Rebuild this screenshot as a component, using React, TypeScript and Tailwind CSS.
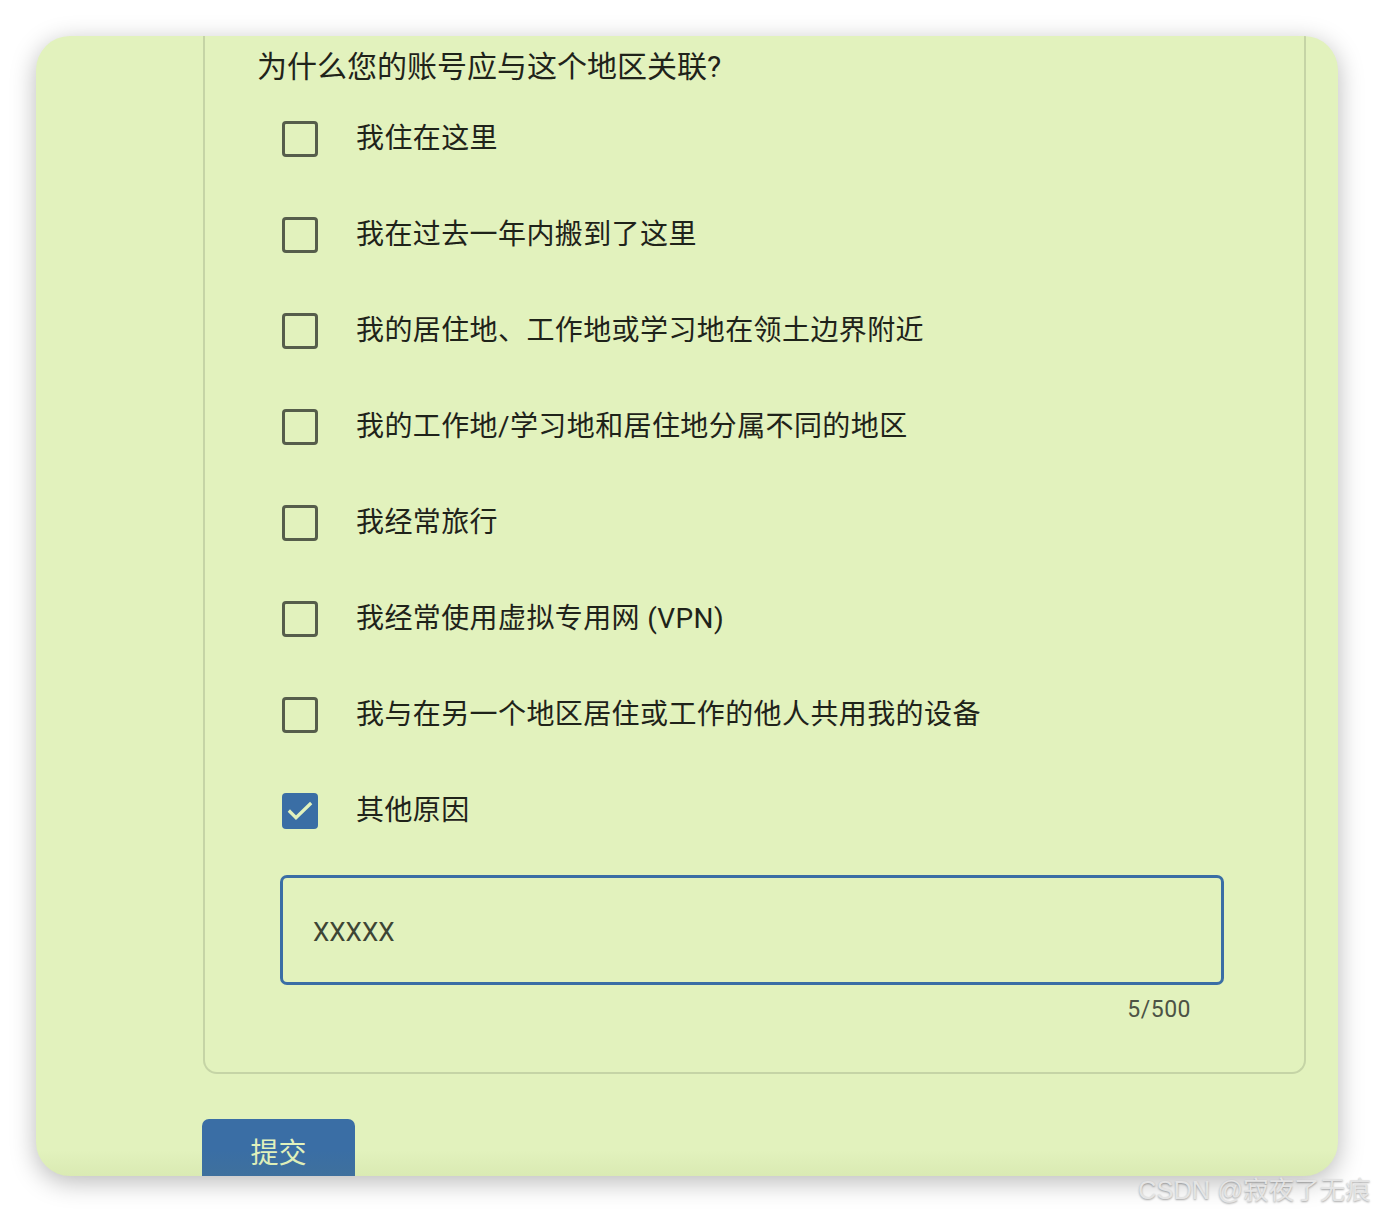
import { useState } from 'react';

const reasons = [
  '我住在这里',
  '我在过去一年内搬到了这里',
  '我的居住地、工作地或学习地在领土边界附近',
  '我的工作地/学习地和居住地分属不同的地区',
  '我经常旅行',
  '我经常使用虚拟专用网 (VPN)',
  '我与在另一个地区居住或工作的他人共用我的设备',
  '其他原因',
];

function CheckBox({ checked, onClick }: { checked: boolean; onClick: () => void }) {
  return (
    <button
      type="button"
      onClick={onClick}
      className={`w-[36px] h-[36px] shrink-0 rounded-[4px] flex items-center justify-center ${checked ? 'bg-[#3a6ea5]' : 'border-[3px] border-[#565e4b]'}`}
    >
      {checked && (
        <svg width="30" height="30" viewBox="0 0 24 24" fill="none">
          <path d="M4 12.5l4.8 4.8L20 6.5" stroke="#e2f2bd" strokeWidth="2.6" strokeLinecap="square" />
        </svg>
      )}
    </button>
  );
}

export default function App() {
  const [picked, setPicked] = useState<boolean[]>(reasons.map((_, i) => i === reasons.length - 1));
  const [other, setOther] = useState('XXXXX');

  const toggle = (i: number) => setPicked((p) => p.map((v, j) => (j === i ? !v : v)));

  return (
    <div
      className="relative w-[1374px] h-[1212px] bg-white pt-[36px] pl-[36px]"
      style={{ fontFamily: 'Roboto, "Noto Sans CJK SC", sans-serif' }}
    >
      <div className="relative w-[1302px] h-[1140px] rounded-[34px] overflow-hidden bg-[#e2f2bd] shadow-[0_6px_26px_rgba(0,0,0,0.28)]">
        {/* question panel, top edge scrolled out of view */}
        <div className="ml-[167px] w-[1103px] h-[1038px] border-x-2 border-b-2 border-[#c5d4a6] rounded-b-[14px] pl-[52px]">
          <h2 className="pt-[11px] text-[30px] leading-[40px] text-[#1f231a]">为什么您的账号应与这个地区关联?</h2>
          <div className="mt-[4px] ml-[25px]">
            {reasons.map((r, i) => (
              <div key={r} className="h-[96px] flex items-center gap-[38px]">
                <CheckBox checked={picked[i]} onClick={() => toggle(i)} />
                <span className="text-[28px] tracking-[0.4px] text-[#1f231a]">{r}</span>
              </div>
            ))}
          </div>
          {picked[reasons.length - 1] && (
            <div className="ml-[23px] w-[944px] mt-[16px]">
              <div className="h-[110px] border-[3px] border-[#3a6ea5] rounded-[7px] flex items-center pl-[30px] pt-[4px]">
                <input
                  value={other}
                  maxLength={500}
                  onChange={(e) => setOther(e.target.value)}
                  className="w-full bg-transparent outline-none text-[26px] text-[#3d4535]"
                />
              </div>
              <div className="mt-[13px] pr-[33px] text-right text-[23px] tracking-[0.5px] leading-[24px] text-[#4c5345]">
                {other.length}/500
              </div>
            </div>
          )}
        </div>
        <button
          type="button"
          className="mt-[45px] ml-[166px] w-[153px] h-[70px] rounded-[7px] bg-[#3a6ea5] text-[#e2f2bd] text-[28px] flex justify-center pt-[16px] leading-[38px]"
        >
          提交
        </button>
        <div className="absolute inset-x-0 bottom-0 h-[26px] bg-gradient-to-b from-transparent to-[rgba(120,140,60,0.08)]" />
      </div>
      <span
        className="absolute left-[1138px] top-[1173px] whitespace-nowrap text-[25.5px] leading-[34px] text-[#e4e4e4] [text-shadow:0_1px_2px_rgba(0,0,0,0.35)]"
        style={{ fontFamily: '"Liberation Sans", "Noto Sans CJK SC", sans-serif' }}
      >
        CSDN @寂夜了无痕
      </span>
    </div>
  );
}
